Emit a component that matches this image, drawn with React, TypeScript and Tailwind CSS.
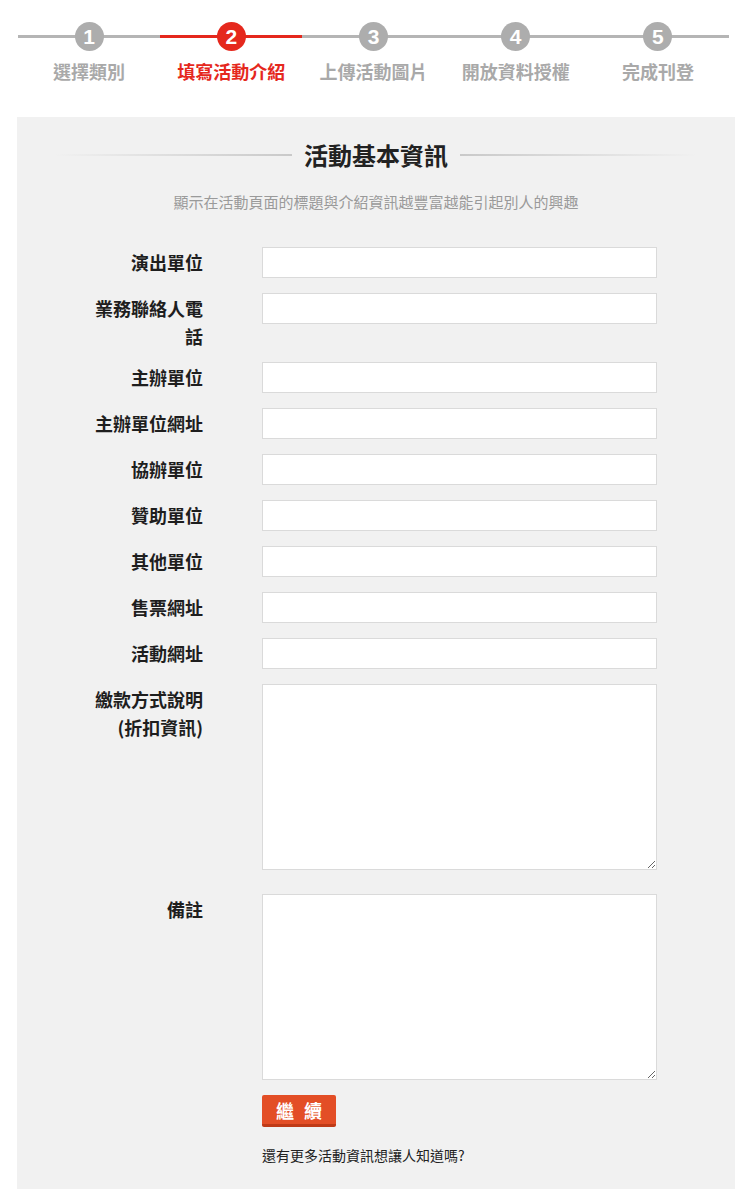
const steps = [
  { n: '1', label: '選擇類別' },
  { n: '2', label: '填寫活動介紹', active: true },
  { n: '3', label: '上傳活動圖片' },
  { n: '4', label: '開放資料授權' },
  { n: '5', label: '完成刊登' },
];

const fields = [
  '演出單位',
  '業務聯絡人電話',
  '主辦單位',
  '主辦單位網址',
  '協辦單位',
  '贊助單位',
  '其他單位',
  '售票網址',
  '活動網址',
];

const font = { fontFamily: '"Noto Sans CJK TC", "Liberation Sans", sans-serif' };

const Stepper = () => (
  <div className="flex px-[18px] pt-[22px]">
    {steps.map((s) => (
      <div key={s.n} className="relative flex w-[143px] flex-col items-center">
        <div
          className={`absolute left-0 right-0 top-[13px] h-[3px] ${s.active ? 'bg-[#e5281d]' : 'bg-[#b5b5b5]'}`}
        />
        <div
          className={`relative z-10 flex h-[29px] w-[29px] items-center justify-center rounded-full text-[21px] font-bold leading-none text-white ${
            s.active ? 'bg-[#e5281d]' : 'bg-[#adadad]'
          }`}
          style={{ fontFamily: '"Liberation Sans", Arial, sans-serif' }}
        >
          {s.n}
        </div>
        <div
          className={`mt-[8px] text-[18px] font-bold leading-[24px] ${s.active ? 'text-[#e5281d]' : 'text-[#a9a9a9]'}`}
        >
          {s.label}
        </div>
      </div>
    ))}
  </div>
);

const Label = ({ children }: { children: React.ReactNode }) => (
  <div className="w-[118px] shrink-0 pt-[1px] text-right text-[18px] font-bold leading-[28px] text-[#1e1e1e]">
    {children}
  </div>
);

export default function App() {
  return (
    <div className="min-h-[1200px] bg-white" style={font}>
      <Stepper />

      <div className="ml-[17px] mt-[34px] w-[718px] bg-[#f1f1f1] pb-[24px] pt-[22px]">
        {/* section heading */}
        <div className="flex items-center px-[38px]">
          <div className="h-[2px] flex-1 bg-gradient-to-r from-transparent to-[#c9c9c9]" />
          <h2 className="px-[12px] text-[24px] font-bold leading-[32px] text-[#222]">活動基本資訊</h2>
          <div className="h-[2px] flex-1 bg-gradient-to-l from-transparent to-[#c9c9c9]" />
        </div>
        <p className="mt-[21px] text-center text-[15px] leading-[20px] text-[#9a9a9a]">
          顯示在活動頁面的標題與介紹資訊越豐富越能引起別人的興趣
        </p>

        <div className="mt-[35px] flex flex-col gap-[15px] pl-[68px]">
          {fields.map((f) => (
            <div key={f} className="flex items-start">
              <div className={f === '業務聯絡人電話' ? '-mb-[3px]' : ''}>
                <Label>{f}</Label>
              </div>
              <input
                type="text"
                className="ml-[59px] h-[31px] w-[395px] border border-[#dadada] bg-white px-2 text-[14px] outline-none"
              />
            </div>
          ))}

          <div className="flex items-start">
            <Label>
              繳款方式說明
              <br />
              (折扣資訊)
            </Label>
            <textarea className="ml-[59px] block h-[186px] w-[395px] border border-[#dadada] bg-white p-2 text-[14px] outline-none" />
          </div>

          <div className="mt-[9px] flex items-start">
            <Label>備註</Label>
            <textarea className="ml-[59px] block h-[186px] w-[395px] border border-[#dadada] bg-white p-2 text-[14px] outline-none" />
          </div>
        </div>

        <div className="pl-[245px]">
          <button
            type="button"
            className="mt-[15px] h-[32px] w-[74px] rounded-[2px] border-b-[3px] border-[#bf3a17] bg-[#e34e26] text-[18px] font-bold leading-[28px] tracking-[10px] text-white"
            style={{ textIndent: '10px' }}
          >
            繼續
          </button>
          <p className="mt-[18px] text-[14px] leading-[20px] text-[#222]">還有更多活動資訊想讓人知道嗎?</p>
        </div>
      </div>
    </div>
  );
}
